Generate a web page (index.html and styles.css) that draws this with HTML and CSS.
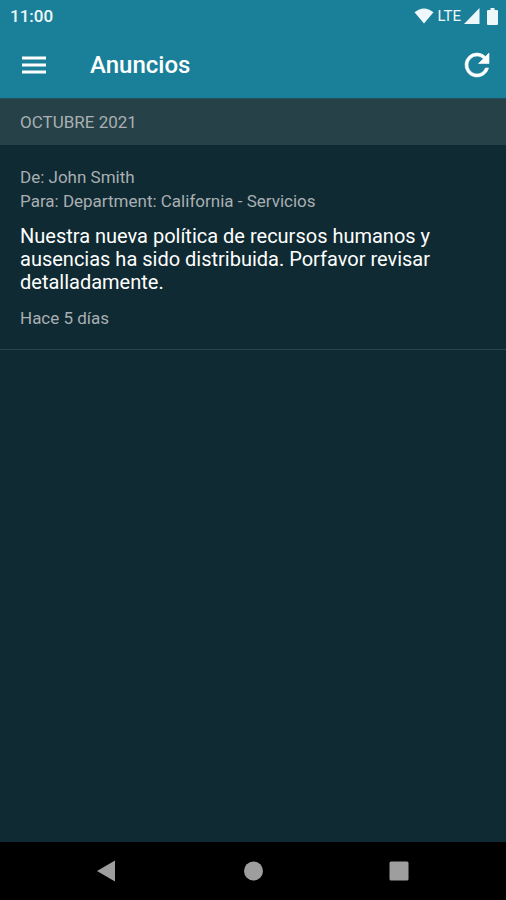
FILE: index.html
```html
<!DOCTYPE html>
<html lang="es">
<head>
<meta charset="utf-8">
<meta name="viewport" content="width=device-width, initial-scale=1">
<title>Anuncios</title>
<link rel="stylesheet" href="styles.css">
</head>
<body>
<div class="top">
  <div class="status">
    <span class="time">11:00</span>
    <div class="signals">
      <svg width="20" height="16" viewBox="0 0 20 16" aria-hidden="true"><path d="M.5 4.300Q10-3.500 19.500 4.300L10 15.500Z"/></svg>
      <span class="network">LTE</span>
      <svg width="16" height="16" viewBox="0 0 16 16" aria-hidden="true"><path d="M0 16 15.500 0V16Z"/></svg>
      <svg class="battery" width="11" height="17" viewBox="0 0 11 17" aria-hidden="true"><path d="M3.500 0h4v2H10q1 0 1 1v13q0 1-1 1H1q-1 0-1-1V3q0-1 1-1h2.500Z"/></svg>
    </div>
  </div>
  <header class="appbar">
    <button class="icon-button" type="button" aria-label="Menú">
      <svg width="24" height="18" viewBox="0 0 24 18"><path d="M0 .5h24v3H0zM0 7.500h24v3H0zM0 14.500h24v3H0z"/></svg>
    </button>
    <h1>Anuncios</h1>
    <button class="icon-button" type="button" aria-label="Actualizar">
      <svg width="36" height="36" viewBox="0 0 24 24" stroke="currentColor" stroke-width=".4"><path d="M17.650 6.350A7.960 7.960 0 0 0 12 4a8 8 0 1 0 7.730 10h-2.080A6 6 0 1 1 12 6c1.660 0 3.140.690 4.220 1.780L13 11h7V4z"/></svg>
    </button>
  </header>
</div>
<main>
  <h2>OCTUBRE 2021</h2>
  <article>
    <p class="meta">De: John Smith</p>
    <p class="meta">Para: Department: California - Servicios</p>
    <p class="message">Nuestra nueva política de recursos humanos y ausencias ha sido distribuida. Porfavor revisar detalladamente.</p>
    <p class="meta">Hace 5 días</p>
  </article>
</main>
<nav class="system">
  <button type="button" aria-label="Atrás"><svg width="20" height="22" viewBox="0 0 20 22"><path d="M0 11 18 .5v21Z"/></svg></button>
  <button type="button" aria-label="Inicio"><svg width="20" height="20" viewBox="0 0 20 20"><circle cx="10.500" cy="10" r="9.500"/></svg></button>
  <button type="button" aria-label="Recientes"><svg width="20" height="20" viewBox="0 0 20 20"><rect x=".5" y=".5" width="19" height="19" rx="1.500"/></svg></button>
</nav>
</body>
</html>
```
FILE: styles.css
```css
* {
  box-sizing: border-box;
}

body {
  margin: 0;
  min-height: 100vh;
  display: flex;
  flex-direction: column;
  background: #0f2a32;
  color: #fff;
  font-family: Roboto, "Liberation Sans", sans-serif;
}

h1, h2, p {
  margin: 0;
}

svg {
  display: block;
  fill: currentColor;
}

button {
  display: grid;
  place-items: center;
  padding: 0;
  border: 0;
  background: none;
  color: inherit;
}

.top {
  background: #1a8099;
}

.status {
  display: flex;
  align-items: center;
  justify-content: space-between;
  height: 32px;
  padding: 0 8px 0 10px;
  color: #eef8fa;
}

.time {
  font-size: 17px;
  font-weight: 500;
}

.signals {
  display: flex;
  align-items: center;
  gap: 3px;
}

.network {
  font-size: 15px;
}

.battery {
  margin-left: 4px;
}

.appbar {
  display: flex;
  align-items: center;
  height: 66px;
  padding: 0 5px 0 10px;
}

.icon-button {
  width: 48px;
  height: 48px;
}

h1 {
  flex: 1;
  padding-left: 32px;
  font-size: 24px;
  font-weight: 500;
  line-height: 30px;
}

main {
  flex: 1;
}

h2 {
  padding: 0 20px;
  border-top: 1px solid #21505b;
  background: #264147;
  color: #a9b0b3;
  font-size: 17px;
  font-weight: 400;
  line-height: 46px;
}

article {
  padding: 20px 64px 19px 20px;
  border-bottom: 1px solid #2a444b;
}

.meta {
  color: #a9afb2;
  font-size: 17px;
  line-height: 24px;
}

.message {
  margin: 12px 0;
  font-size: 20px;
  line-height: 23px;
}

.system {
  display: flex;
  justify-content: center;
  gap: 98px;
  padding: 5px 0;
  background: #000;
  color: #9e9e9e;
}

.system button {
  width: 48px;
  height: 48px;
}
```
